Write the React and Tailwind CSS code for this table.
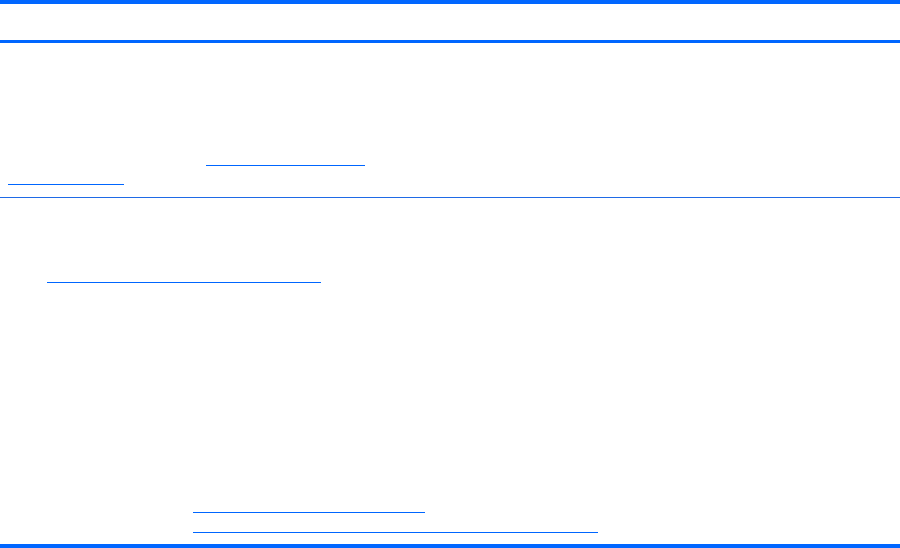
export default function App() {
  return (
    <div className="flex h-[548px] w-[900px] flex-col bg-white">
      {/* Header rules */}
      <div className="h-[4px] w-full bg-[#0066ff]" />
      <div className="mt-[36px] h-[3px] w-full bg-[#0066ff]" />

      {/* Link underlines */}
      <div className="ml-[206px] mt-[122px] h-px w-[159px] bg-[#0066ff]" />
      <div className="ml-[8px] mt-[18px] h-px w-[116px] bg-[#0066ff]" />

      {/* Section divider */}
      <div className="mt-[12px] h-px w-full bg-[#1f6ae6]" />

      <div className="ml-[47px] mt-[84px] h-px w-[274px] bg-[#0066ff]" />

      <div className="ml-[193px] mt-[229px] h-px w-[232px] bg-[#0066ff]" />
      <div className="ml-[193px] mt-[19px] h-px w-[405px] bg-[#0066ff]" />

      {/* Footer rule */}
      <div className="mt-[11px] h-[4px] w-full bg-[#0066ff]" />
    </div>
  )
}
